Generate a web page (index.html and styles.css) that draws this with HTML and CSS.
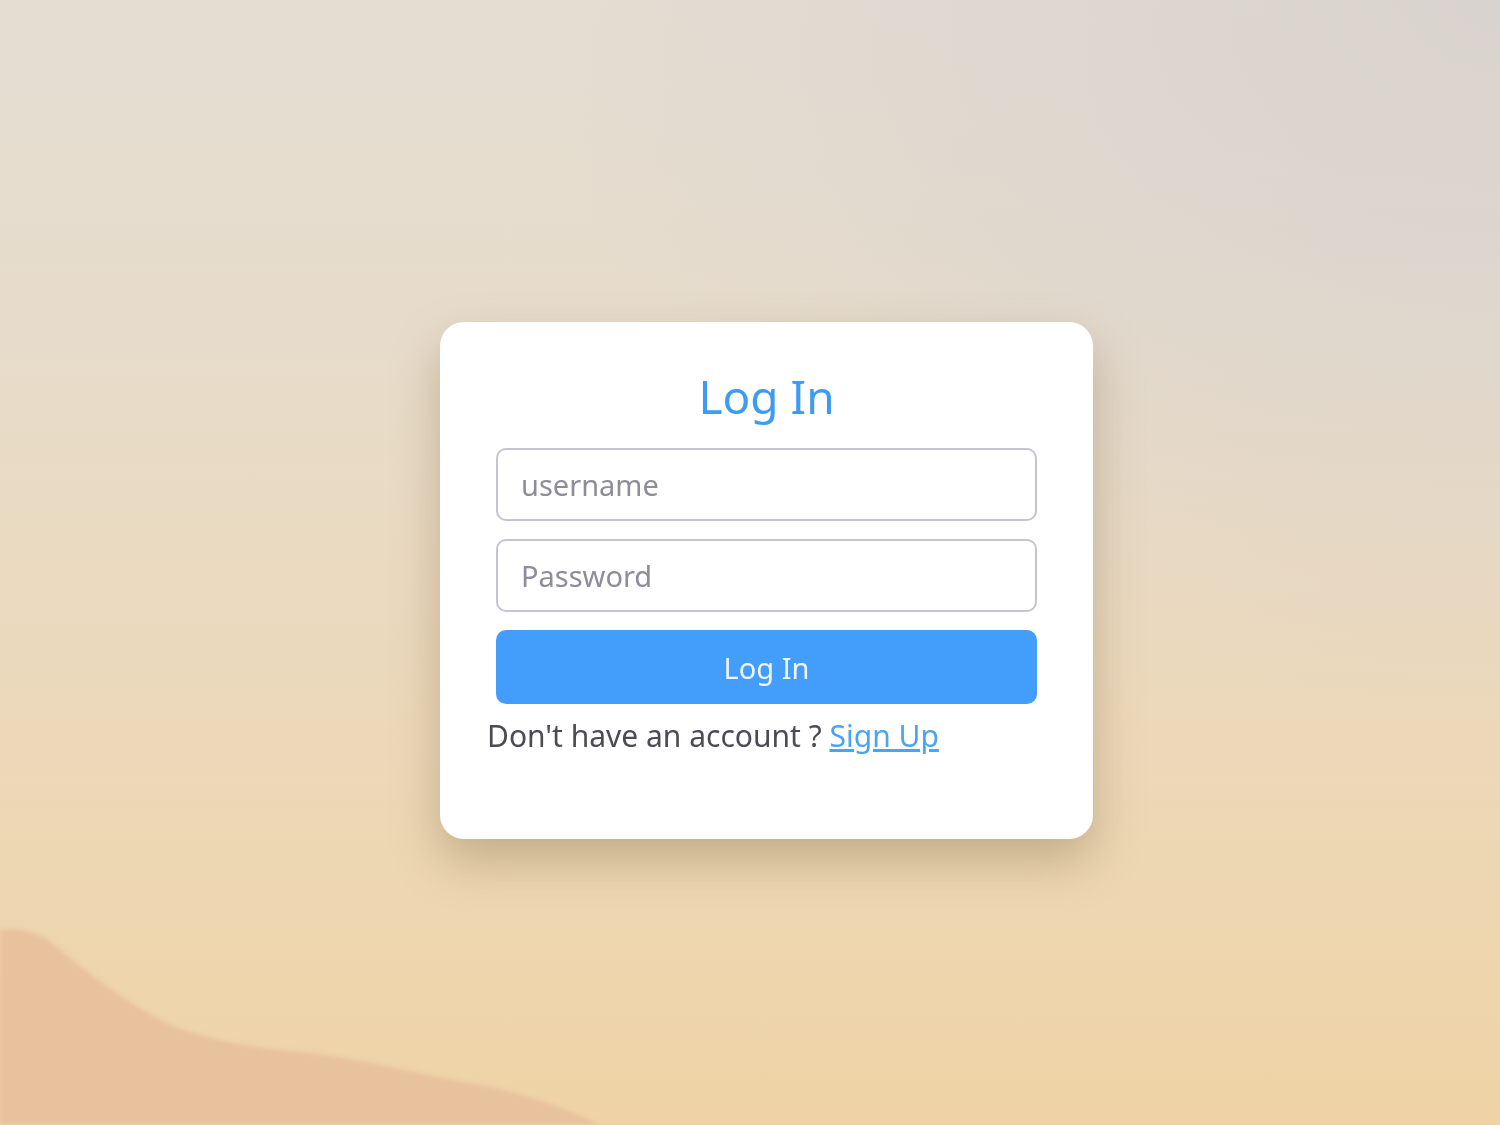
FILE: index.html
```html
<!DOCTYPE html>
<html lang="en">
<head>
    <meta charset="UTF-8">
    <meta name="viewport" content="width=device-width, initial-scale=1.0">
    <title>Log In</title>
    <link rel="stylesheet" href="styles.css">
</head>
<body>
    <svg class="hill" viewBox="0 0 1500 1125" preserveAspectRatio="none">
        <path d="M0 930 C20 928 40 930 60 950 C90 975 130 1005 170 1025 C210 1040 250 1048 300 1052 C360 1058 420 1075 480 1085 C530 1095 570 1110 600 1125 L0 1125 Z"/>
    </svg>
    <div class="card">
        <h1>Log In</h1>
        <form class="form">
            <input type="text" placeholder="username">
            <input type="password" placeholder="Password">
            <button type="button" class="btn">Log In</button>
        </form>
        <p class="signup">Don't have an account ? <a href="#">Sign Up</a></p>
    </div>
</body>
</html>
```

FILE: styles.css
```css
*{
    margin: 0;
    padding: 0;
    box-sizing: border-box;
}
body{
    height: 100vh;
    display: flex;
    justify-content: center;
    align-items: center;
    padding: 36px 0 0 33px;
    font-family: "Noto Sans", "Open Sans", sans-serif;
    background:
        radial-gradient(ellipse at 100% 0%, rgba(214, 208, 206, 0.8), rgba(214, 208, 206, 0) 45%),
        linear-gradient(to bottom, #e4ddd2 0%, #e7dccb 30%, #ecd8b9 65%, #efd3a5 100%);
    overflow: hidden;
}
.hill{
    position: fixed;
    left: 0;
    top: 0;
    width: 100%;
    height: 100%;
    filter: blur(2px);
}
.hill path{
    fill: #e8c19d;
}
.card{
    position: relative;
    width: 653px;
    height: 517px;
    background-color: white;
    border-radius: 24px;
    padding: 44px 56px 0;
    box-shadow: 0 22px 48px rgba(120, 95, 60, 0.35);
}
.card h1{
    font-weight: 400;
    font-size: 46px;
    line-height: 60px;
    text-align: center;
    color: #3e9bf5;
    margin-bottom: 22px;
}
.form{
    display: flex;
    flex-direction: column;
    gap: 18px;
}
.form input{
    height: 73px;
    border: 2px solid #c6c4d0;
    border-radius: 10px;
    padding-left: 23px;
    font-family: inherit;
    font-size: 29px;
    color: #333;
    outline: none;
}
.form input::placeholder{
    color: #8d8c98;
}
.btn{
    height: 74px;
    border: none;
    border-radius: 10px;
    background-color: #429dfb;
    color: #eef5ff;
    font-family: inherit;
    font-size: 29px;
    cursor: pointer;
}
.signup{
    margin: 11px 0 0 -9px;
    font-size: 30px;
    color: #4b4a55;
}
.signup a{
    color: #4aa3f5;
}
```
